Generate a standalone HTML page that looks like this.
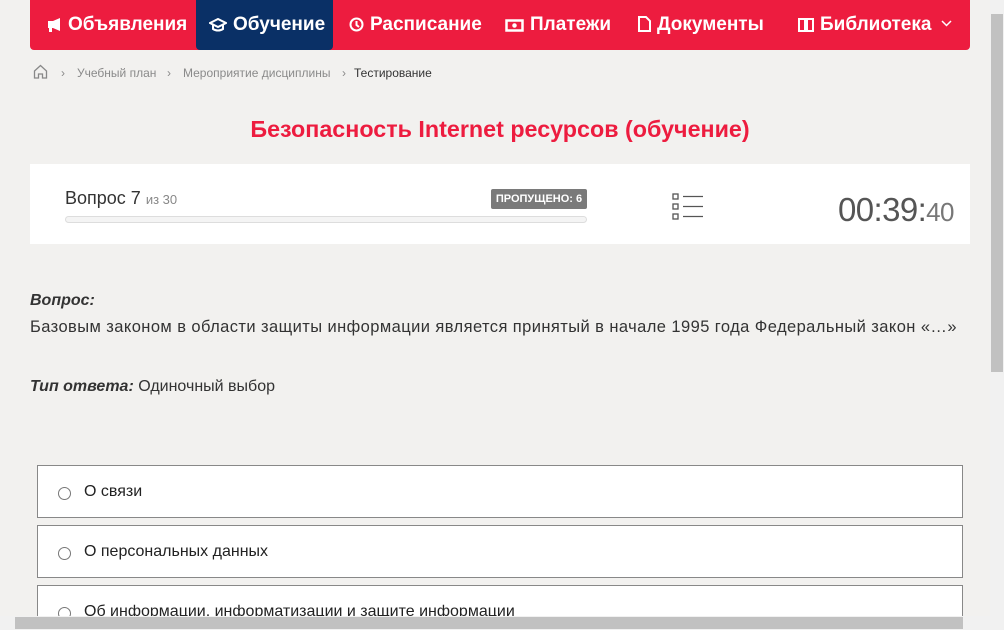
<!DOCTYPE html>
<html><head><meta charset="utf-8"><style>
*{box-sizing:border-box;margin:0;padding:0}
html,body{width:1004px;height:630px;overflow:hidden}
body{background:#f2f1ef;font-family:"Liberation Sans",sans-serif;position:relative;color:#222}
.nav{position:absolute;left:30px;top:0;width:940px;height:50px;background:#ed1c3f;border-radius:0 0 4px 4px}
.ni{position:absolute;top:0;height:50px;line-height:50px;color:#fff;font-size:19px;font-weight:bold;white-space:nowrap}
.ni svg{vertical-align:-2px;margin-right:6px}
.act{background:#0a3066;border-radius:0 0 4px 4px}
.bc{position:absolute;top:66px;font-size:12px;color:#8a8a8a}
h1{position:absolute;top:116px;left:0;width:1000px;text-align:center;color:#ed1c3f;font-size:23.3px;font-weight:bold}
.card{position:absolute;left:30px;top:164px;width:940px;height:80px;background:#fff}
.opt{position:absolute;left:37px;width:926px;height:53px;border:1px solid #888;background:#fff;font-size:16px}
.opt span{position:absolute;left:46px;top:17px}
.opt i{position:absolute;left:20px;top:21px;width:13px;height:13px;border:1px solid #777;border-radius:50%}
</style></head><body>
<div class="nav">
<div class="ni" style="left:17px"><svg width="15" height="14" fill="#fff"><path d="M1 3h5l7-3v13l-7-3H5v4H2v-4H1z"/></svg>Объявления</div>
<div class="ni act" style="left:166px;width:137px;padding-left:13px"><svg width="18" height="14" fill="none" stroke="#fff" stroke-width="2"><path d="M1 5l8-4 8 4-8 4z"/><path d="M4 7v4c3 2 7 2 10 0V7"/></svg>Обучение</div>
<div class="ni" style="left:319px"><svg width="15" height="15" fill="none" stroke="#fff" stroke-width="2"><circle cx="7.5" cy="7.5" r="6"/><path d="M7.5 4v4l2.5 2"/></svg>Расписание</div>
<div class="ni" style="left:475px"><svg width="19" height="13" fill="none" stroke="#fff" stroke-width="2.5"><rect x="1.5" y="1.5" width="16" height="10"/><circle cx="9.5" cy="6.5" r="1" fill="#fff"/></svg>Платежи</div>
<div class="ni" style="left:608px"><svg width="13" height="16" fill="none" stroke="#fff" stroke-width="2"><path d="M1 1h7l4 4v10H1z"/></svg>Документы</div>
<div class="ni" style="left:768px"><svg width="16" height="15" fill="none" stroke="#fff" stroke-width="2"><path d="M1 2h6v12H1zM9 2h6v12H9z"/></svg>Библиотека <svg width="11" height="8" fill="none" stroke="#fff" stroke-width="1.5" style="margin-left:4px;vertical-align:2px"><path d="M1 1l4.5 4.5L10 1"/></svg></div>
</div>
<svg style="position:absolute;left:33px;top:64px" width="15" height="15" fill="none" stroke="#888" stroke-width="1.3"><path d="M1.5 7L7.5 1.5 13.5 7V14h-4v-4h-4v4h-4z"/></svg>
<div class="bc" style="left:61px">&#8250;</div>
<div class="bc" style="left:77px">Учебный план</div>
<div class="bc" style="left:167px">&#8250;</div>
<div class="bc" style="left:183px">Мероприятие дисциплины</div>
<div class="bc" style="left:342px">&#8250;</div>
<div class="bc" style="left:354px;color:#333">Тестирование</div>
<h1>Безопасность Internet ресурсов (обучение)</h1>
<div class="card">
<div style="position:absolute;left:35px;top:24px;font-size:18px;color:#333">Вопрос 7 <span style="font-size:13px;color:#888">из 30</span></div>
<div style="position:absolute;left:461px;top:25px;height:20px;width:96px;background:#7a7a7a;color:#fff;font-size:11px;font-weight:bold;text-align:center;line-height:20px;border-radius:2px">ПРОПУЩЕНО: 6</div>
<div style="position:absolute;left:35px;top:52px;width:522px;height:7px;border:1px solid #ddd;border-radius:4px;background:#f4f4f4"></div>
<svg style="position:absolute;left:642px;top:28px" width="32" height="30" fill="none" stroke="#555" stroke-width="1.3"><rect x="1" y="2" width="5" height="5"/><rect x="1" y="12" width="5" height="5"/><rect x="1" y="22" width="5" height="5"/><path d="M11 4.5h20M11 14.5h20M11 24.5h20"/></svg>
<div style="position:absolute;left:808px;top:27px;font-size:33px;color:#555;letter-spacing:-0.6px">00:39:<span style="font-size:26px;color:#777">40</span></div>
</div>
<div style="position:absolute;left:30px;top:292px;font-size:16px;font-weight:bold;font-style:italic;color:#333">Вопрос:</div>
<div style="position:absolute;left:30px;top:318px;font-size:16.5px;color:#333;letter-spacing:0.42px">Базовым законом в области защиты информации является принятый в начале 1995 года Федеральный закон «…»</div>
<div style="position:absolute;left:30px;top:378px;font-size:16px;color:#333"><b><i>Тип ответа:</i></b> Одиночный выбор</div>
<div class="opt" style="top:465px"><i></i><span>О связи</span></div>
<div class="opt" style="top:525px"><i></i><span>О персональных данных</span></div>
<div class="opt" style="top:585px;height:31px;border-bottom:none"><i></i><span>Об информации, информатизации и защите информации</span></div>
<div style="position:absolute;left:990px;top:0;width:14px;height:616px;background:#f1f1f1"><div style="position:absolute;left:1px;top:14px;width:12px;height:358px;background:#c1c1c1"></div></div>
<div style="position:absolute;left:0;top:616px;width:1004px;height:14px;background:#f1f1f1"><div style="position:absolute;left:15px;top:1px;width:948px;height:12px;background:#c1c1c1"></div></div>
</body></html>
